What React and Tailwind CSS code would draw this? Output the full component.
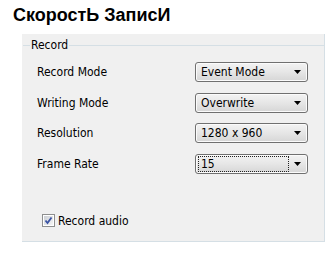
import React from "react";

const ui = { fontFamily: '"DejaVu Sans Condensed", "DejaVu Sans", sans-serif' };

function Arrow() {
  return (
    <svg width="7" height="4" viewBox="0 0 7 4" className="block">
      <path d="M0 0H7L3.5 4Z" fill="#000" />
    </svg>
  );
}

function Select({ value, focused }) {
  return (
    <div className="w-[113px] h-[20px] rounded-[3px] border border-[#707070] bg-gradient-to-b from-[#f3f3f3] via-[#e6e6e6] to-[#d6d6d6] shadow-[inset_0_0_0_1px_#fbfbfb] flex items-center pl-[2px] pr-[6px]">
      <div
        className={
          "flex-1 h-[16px] flex items-center pl-[2px] " +
          (focused ? "border border-dotted border-[#222]" : "border border-transparent")
        }
      >
        <span className="text-[12px] leading-none text-black">{value}</span>
      </div>
      <div className="ml-[5px]">
        <Arrow />
      </div>
    </div>
  );
}

function Row({ label, value, focused, mt }) {
  return (
    <div className={"flex items-center h-[20px] pl-[15px] " + mt}>
      <div className="w-[158px] text-[12px] leading-none text-black">{label}</div>
      <Select value={value} focused={focused} />
    </div>
  );
}

export default function App() {
  return (
    <div className="w-[330px] h-[254px] bg-white overflow-hidden">
      <div
        className="pl-[13px] pt-[5px] h-[34px] text-[18px] leading-[20px] font-bold text-black"
        style={{ fontFamily: '"Liberation Sans", Arial, sans-serif' }}
      >
        СкоростЬ ЗаписИ
      </div>
      <div
        className="ml-[22px] w-[303px] h-[208px] bg-[#f0f0f0] border-r border-b border-[#d5dfe5] flex flex-col"
        style={ui}
      >
        <div className="mt-[5px] h-[12px] flex items-center pl-[1px]">
          <div className="w-[7px] h-px bg-[#d5dfe5]" />
          <span className="text-[12px] leading-none text-black px-[1px]">Record</span>
          <div className="flex-1 h-px bg-[#d5dfe5]" />
        </div>
        <Row label="Record Mode" value="Event Mode" mt="mt-[11px]" />
        <Row label="Writing Mode" value="Overwrite" mt="mt-[11px]" />
        <Row label="Resolution" value="1280 x 960" mt="mt-[10px]" />
        <Row label="Frame Rate" value="15" focused mt="mt-[11px]" />
        <div className="mt-[40px] ml-[20px] flex items-center h-[13px]">
          <div className="w-[13px] h-[13px] border border-[#8e8f8f] bg-white p-[1px]">
            <div className="w-full h-full bg-gradient-to-br from-[#cbcfd5] to-[#f6f6f6] flex items-center justify-center">
              <svg width="9" height="9" viewBox="0 0 9 9">
                <path d="M1.5 4.5L3.5 7L7.5 1.5" fill="none" stroke="#3a53a4" strokeWidth="1.8" />
              </svg>
            </div>
          </div>
          <span className="ml-[3px] text-[12px] leading-none text-black">Record audio</span>
        </div>
      </div>
    </div>
  );
}
